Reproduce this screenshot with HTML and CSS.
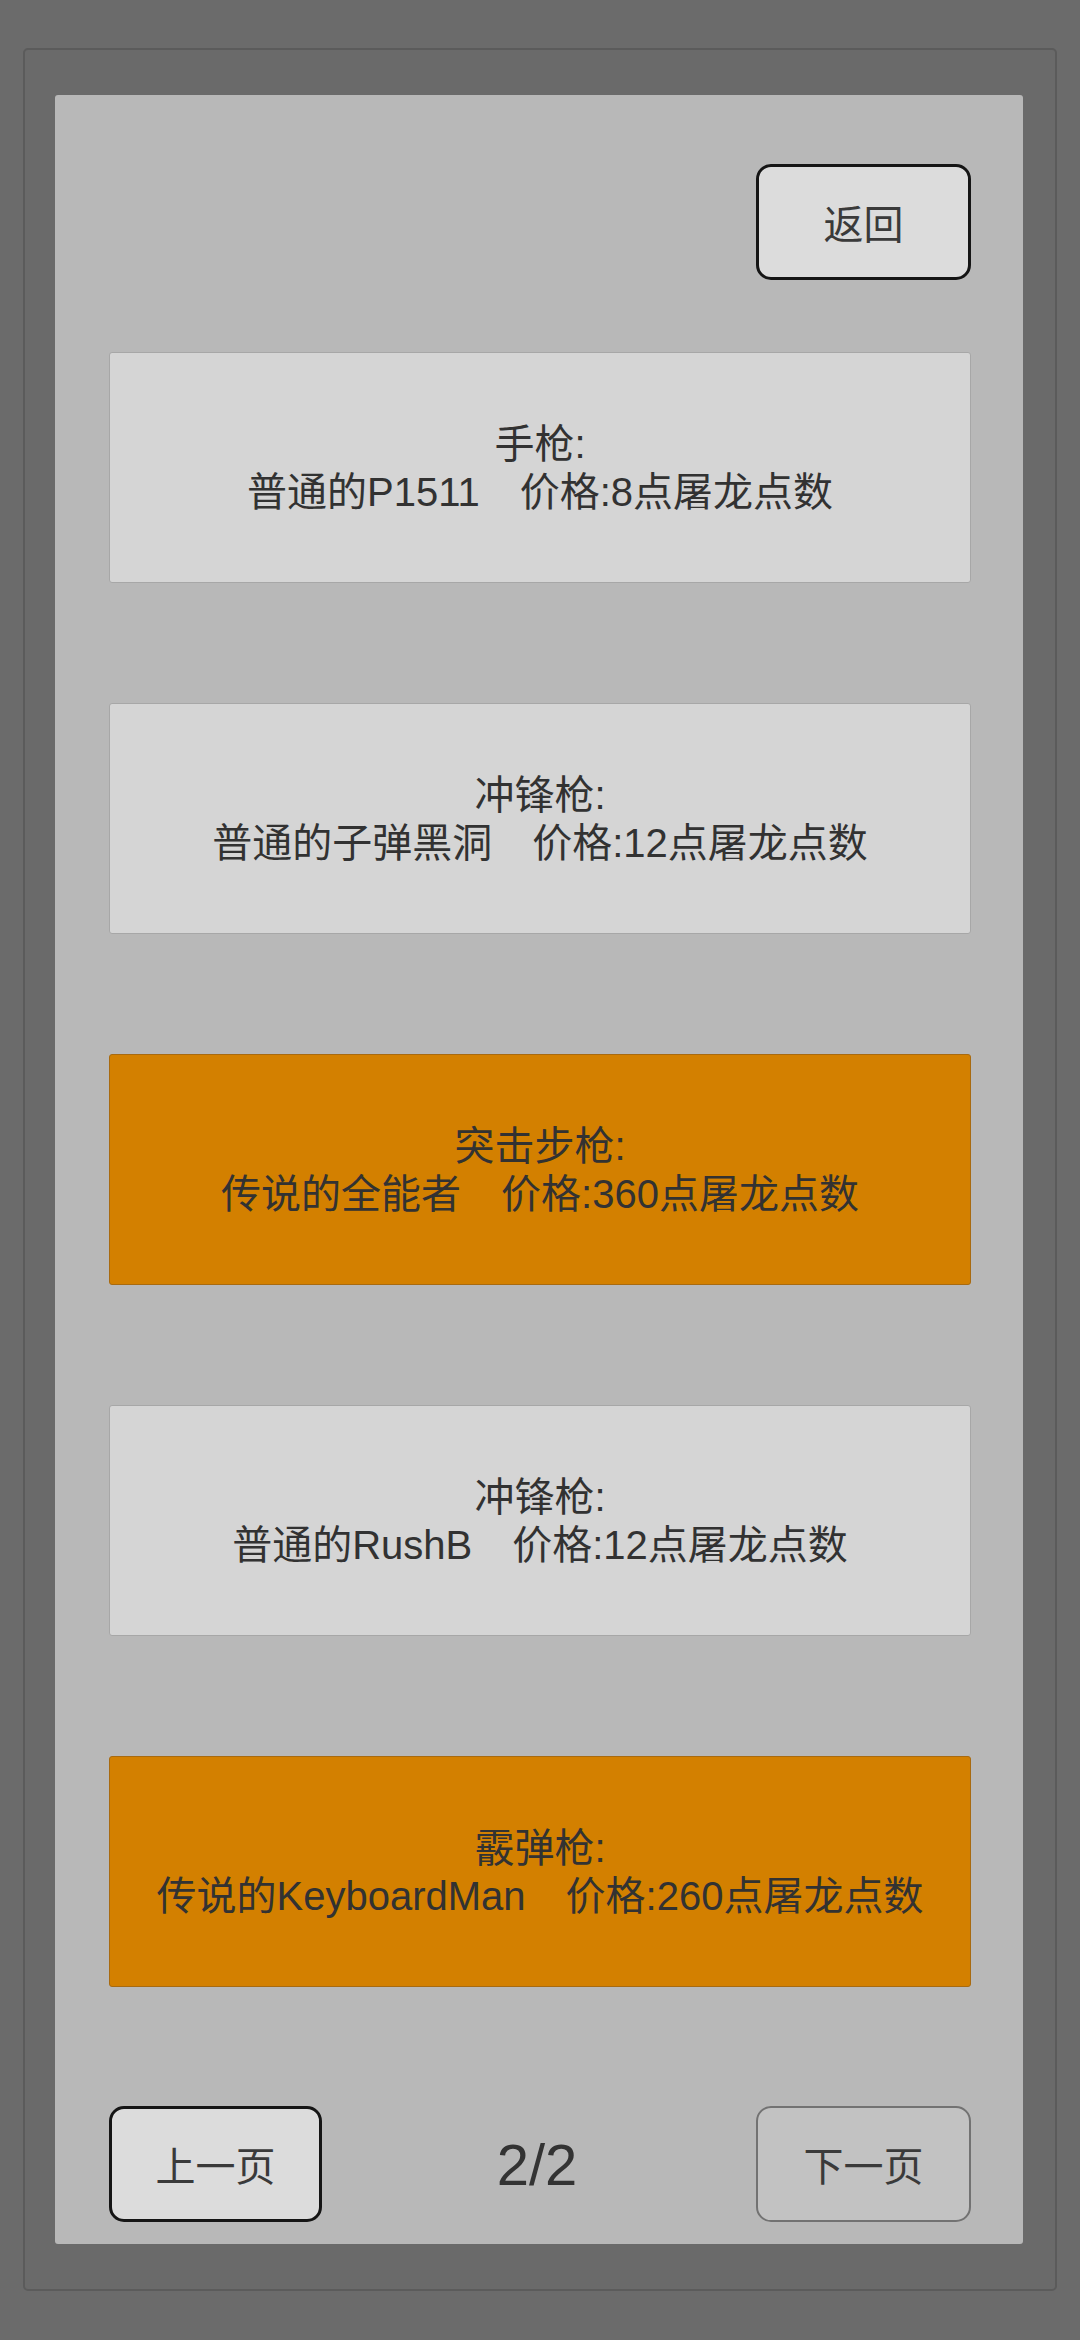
FILE: index.html
```html
<!DOCTYPE html>
<html lang="zh-CN">
<head>
    <meta charset="UTF-8">
    <meta name="viewport" content="width=device-width, initial-scale=1.0">
    <title>商店</title>
    <link rel="stylesheet" href="styles.css">
</head>
<body>
    <!-- Внешняя рамка -->
    <div class="frame">
        <div class="shop">
            <div class="shop-top">
                <button class="btn">返回</button>
            </div>

            <!-- Список товаров -->
            <div class="goods">
                <div class="item">
                    <span>手枪:</span>
                    <span>普通的P1511　价格:8点屠龙点数</span>
                </div>
                <div class="item">
                    <span>冲锋枪:</span>
                    <span>普通的子弹黑洞　价格:12点屠龙点数</span>
                </div>
                <div class="item legend">
                    <span>突击步枪:</span>
                    <span>传说的全能者　价格:360点屠龙点数</span>
                </div>
                <div class="item">
                    <span>冲锋枪:</span>
                    <span>普通的RushB　价格:12点屠龙点数</span>
                </div>
                <div class="item legend">
                    <span>霰弹枪:</span>
                    <span>传说的KeyboardMan　价格:260点屠龙点数</span>
                </div>
            </div>

            <!-- Пагинация -->
            <div class="pager">
                <button class="btn">上一页</button>
                <span class="page-num">2/2</span>
                <button class="btn disabled">下一页</button>
            </div>
        </div>
    </div>
</body>
</html>
```

FILE: styles.css
```css
* {
    box-sizing: border-box;
}

body {
    margin: 0;
    padding: 48px 23px 0 23px;
    background: #6b6b6b;
    font-family: 'Liberation Sans', 'Noto Sans CJK SC', sans-serif;
    color: #323232;
    height: 2340px;
    overflow: hidden;
}

/* Внешняя рамка */
.frame {
    width: 1034px;
    height: 2243px;
    border: 2px solid #5b5b5b;
    border-radius: 5px;
    background: #6a6a6a;
    padding: 45px 32px 45px 30px;
}

.shop {
    height: 100%;
    background: #b8b8b8;
    border-radius: 3px;
    padding: 69px 52px 22px 54px;
    display: flex;
    flex-direction: column;
}

.shop-top {
    display: flex;
    justify-content: flex-end;
}

/* Кнопки */
.btn {
    width: 215px;
    height: 116px;
    background: #dcdcdc;
    border: 3px solid #151515;
    border-radius: 15px;
    font-family: 'Liberation Sans', 'Noto Sans CJK SC', sans-serif;
    font-size: 40px;
    color: #3a3a3a;
    padding: 0;
    cursor: pointer;
}

.btn.disabled {
    background: #c2c2c2;
    border: 2px solid #727272;
    color: #3a3a3a;
}

/* Товары */
.goods {
    margin-top: 72px;
    display: flex;
    flex-direction: column;
    gap: 120px;
}

.item {
    height: 231px;
    background: #d5d5d5;
    border: 1px solid #a7a7a7;
    border-radius: 3px;
    display: flex;
    flex-direction: column;
    justify-content: center;
    align-items: center;
    font-size: 40px;
    line-height: 48px;
    white-space: pre;
}

.item.legend {
    background: #d38000;
    border-color: #a86a10;
}

/* Пагинация */
.pager {
    margin-top: auto;
    display: flex;
    justify-content: space-between;
    align-items: center;
}

.pager .btn:first-child {
    width: 213px;
}

.page-num {
    font-size: 58px;
    color: #333;
    transform: translateX(-2px);
}
```
